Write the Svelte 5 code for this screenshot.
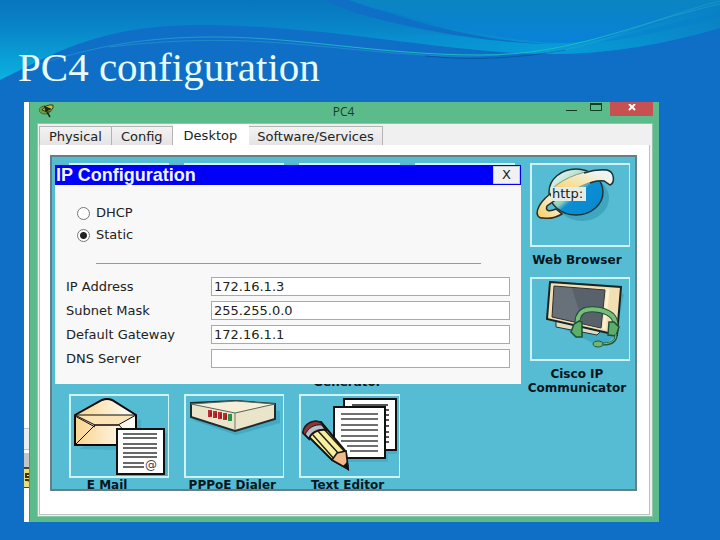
<script>
  const tabs = ['Physical', 'Config', 'Desktop', 'Software/Services'];
  let activeTab = $state('Desktop');
  let mode = $state('static');
  let fields = $state([
    { id: 'ip', label: 'IP Address', value: '172.16.1.3' },
    { id: 'mask', label: 'Subnet Mask', value: '255.255.0.0' },
    { id: 'gateway', label: 'Default Gateway', value: '172.16.1.1', active: true },
    { id: 'dns', label: 'DNS Server', value: '' }
  ]);
  const apps = [
    {}, {}, {}, {},
    { lines: ['Web Browser'], icon: 'web', roomy: true },
    {}, {},
    { lines: ['Traffic', 'Generator'] },
    {},
    { lines: ['Cisco IP', 'Communicator'], icon: 'phone', roomy: true },
    { lines: ['E Mail'], icon: 'mail' },
    { lines: ['PPPoE Dialer'], icon: 'modem' },
    { lines: ['Text Editor'], icon: 'editor' }
  ];
</script>

<main class="slide">
  <svg class="waves" viewBox="0 0 720 100" preserveAspectRatio="none" aria-hidden="true">
    <defs>
      <linearGradient id="left" x1="0" y1="0" x2="0" y2="80" gradientUnits="userSpaceOnUse">
        <stop offset="0" stop-color="#0876c0" />
        <stop offset="0.35" stop-color="#0885c8" />
        <stop offset="1" stop-color="#0bb2e0" />
      </linearGradient>
      <linearGradient id="mid" x1="0" y1="0" x2="0" y2="45" gradientUnits="userSpaceOnUse">
        <stop offset="0" stop-color="#0b84c2" />
        <stop offset="1" stop-color="#0882da" />
      </linearGradient>
      <linearGradient id="right" x1="330" y1="0" x2="720" y2="0" gradientUnits="userSpaceOnUse">
        <stop offset="0" stop-color="#0883cc" />
        <stop offset="0.55" stop-color="#069edb" />
        <stop offset="1" stop-color="#0b83c4" />
      </linearGradient>
      <linearGradient id="glow" x1="40" y1="0" x2="720" y2="0" gradientUnits="userSpaceOnUse">
        <stop offset="0" stop-color="#22a8d8" stop-opacity="0.4" />
        <stop offset="0.25" stop-color="#2299d0" />
        <stop offset="0.5" stop-color="#1cbcc8" />
        <stop offset="0.8" stop-color="#18bcc0" />
        <stop offset="1" stop-color="#1294c8" />
      </linearGradient>
    </defs>
    <path d="M0 0H720V28C665 44 610 54 550 54C450 54 330 25 200 25C100 25 55 53 0 80Z" fill="url(#left)" />
    <path d="M330 0H720V28C665 44 610 54 550 54C505 54 450 45 400 37C430 30 500 42 560 44Z" fill="url(#right)" opacity="0.7" />
    <path d="M328 0L350 0C410 18 490 41 560 43C610 43 665 20 720 3V0H350Z" fill="url(#mid)" />
    <path d="M326 0H348C405 19 470 40 550 44C480 43 400 26 360 14Q340 8 326 0Z" fill="#0f6fc6" />
    <path d="M600 42C645 29 680 22 720 12V17C675 29 640 37 600 42Z" fill="#077fce" opacity="0.45" />
    <path d="M40 64C110 41 165 37 215 37C300 37 380 55 480 55C575 55 630 24 720 4" fill="none" stroke="url(#glow)" />
    <path d="M110 47C215 34 285 43 360 50S460 57 500 55" fill="none" stroke="#2a93ce" opacity="0.7" />
    <path d="M425 56C475 61 520 58 565 50" fill="none" stroke="#0751a0" opacity="0.8" />
    <path d="M545 53C605 45 655 17 720 1" fill="none" stroke="#26a6c8" opacity="0.5" />
  </svg>

  <h1>PC4 configuration</h1>

  <section class="capture">
    <div class="backdrop" aria-hidden="true">
      <span class="pale"></span>
      <span class="grey"></span>
      <span class="yellow">
        <svg width="5" height="18" viewBox="0 0 5 18"><path d="M5 5H2V8H5M1 11H4L5 12" fill="none" stroke="#3c3410" stroke-width="2" /></svg>
      </span>
    </div>
    <div class="window">
      <header class="titlebar">
        <svg class="logo" width="16" height="14" viewBox="0 0 16 14" aria-hidden="true">
          <ellipse cx="6" cy="6" rx="6" ry="4" fill="#6b9c3e" stroke="#3d6a45" />
          <path d="M3 6Q7 0 14 1Q15 6 9 8Z" fill="#d7b63c" stroke="#2a3b20" />
          <path d="M6 3L11 5L7 7ZM8 8L11 13" fill="#142c18" stroke="#142c18" stroke-width="1.5" />
        </svg>
        <span class="caption">PC4</span>
        <button class="sys" aria-label="Minimize"><svg width="12" height="10" viewBox="0 0 12 10"><path d="M0 8.5H11" stroke="#123c26" /></svg></button>
        <button class="sys" aria-label="Maximize"><svg width="12" height="10" viewBox="0 0 12 10"><path d="M.5 2H11.500V8.500H.5Z" fill="none" stroke="#123c26" /><path d="M0 2H12" stroke="#123c26" stroke-width="2" /></svg></button>
        <button class="close" aria-label="Close window"><svg width="8" height="7" viewBox="0 0 8 7"><path d="M1 0L7 6M7 0L1 6" stroke="#fff" stroke-width="2" /></svg></button>
      </header>

      <div class="client">
        <nav class="tabs">
          {#each tabs as tab}
            <button class="tab" class:active={tab === activeTab} onclick={() => (activeTab = tab)}>{tab}</button>
          {/each}
        </nav>
        <div class="page">
          <div class="desktop">
            {#each apps as app}
              <div class="app" class:roomy={app.roomy}>
                <div class="tile">
                  {#if app.icon === 'web'}
                    <svg width="96" height="80" viewBox="0 0 96 80" aria-hidden="true">
                      <defs>
                        <linearGradient id="globe" x1="0" y1="0" x2="1" y2="1">
                          <stop offset="0" stop-color="#fff" /><stop offset="0.48" stop-color="#8fd0b8" />
                          <stop offset="0.56" stop-color="#0a8fd4" /><stop offset="1" stop-color="#0a86cc" />
                        </linearGradient>
                        <linearGradient id="ring" x1="0" y1="1" x2="1" y2="0">
                          <stop offset="0" stop-color="#f8cc5c" /><stop offset="0.5" stop-color="#f5e6b0" /><stop offset="0.8" stop-color="#eef4f2" />
                        </linearGradient>
                      </defs>
                      <ellipse cx="50" cy="33" rx="27" ry="23" fill="#2d94ae" opacity="0.55" />
                      <ellipse cx="44" cy="27" rx="27" ry="23" fill="url(#globe)" stroke="#203236" stroke-width="1.5" />
                      <path d="M18 29C4 40 1 53 11 53C17 54 25 52 30 49L24 44C17 47 13 46 15 41L22 36Z" fill="url(#ring)" stroke="#302c20" stroke-width="1.5" />
                      <path d="M20 24C32 12 55 4 75 5C83 7 83 18 78 20L72 16C60 15 50 20 32 30Z" fill="url(#ring)" stroke="#8f9880" />
                      <path d="M52 8Q64 4 75 5C83 7 83 18 78 20L72 16Q66 15 58 18" fill="none" stroke="#203236" stroke-width="1.5" />
                      <rect x="19" y="22" width="35" height="14" fill="#e3ece7" />
                      <text x="20" y="33" font-size="13" fill="#182428">http:</text>
                    </svg>
                  {:else if app.icon === 'phone'}
                    <svg width="96" height="80" viewBox="0 0 96 80" aria-hidden="true">
                      <path d="M22 45L73 50L84 13L92 15L84 56L70 68L48 58Z" fill="#2d94ae" opacity="0.45" />
                      <path d="M24 42V48L65 56L69 52V47Z" fill="#dcdcc4" stroke="#26322e" />
                      <path d="M18 3L89 8L85 56L15 40Z" fill="#f2dfb4" stroke="#192422" stroke-width="2" />
                      <path d="M22 7L73 11L69 49L20 38Z" fill="#68717a" stroke="#292f34" />
                      <path d="M40 9L73 11L69 49L51 45Z" fill="#4c545e" opacity="0.55" />
                      <path d="M76 10L72 50" stroke="#fff3cf" stroke-width="3" />
                      <path d="M46 49C43 30 55 29 68 31C81 34 86 41 82 51" fill="none" stroke="#1c5038" stroke-width="6" />
                      <path d="M46 49C43 30 55 29 68 31C81 34 86 41 82 51" fill="none" stroke="#77bd78" stroke-width="4" />
                      <path d="M47 42L50 43V58L44 58L39 53L42 45ZM77 43H82L87 48L84 57L76 56Z" fill="#5dae68" stroke="#1c5038" stroke-width="1.5" />
                      <path d="M84 55Q85 66 69 65" fill="none" stroke="#23583b" stroke-width="3" />
                      <path d="M84 55Q85 65 69 65" fill="none" stroke="#77bd78" />
                      <ellipse cx="66" cy="65" rx="5" ry="3" fill="#72b671" stroke="#23583b" />
                    </svg>
                  {:else if app.icon === 'mail'}
                    <svg width="96" height="80" viewBox="0 0 96 80" aria-hidden="true">
                      <defs><linearGradient id="paper"><stop offset="0" stop-color="#fad48d" /><stop offset="1" stop-color="#fff" /></linearGradient></defs>
                      <path d="M8 53L45 54V37H97V83H48L70 46V23Z" fill="#2d94ae" opacity="0.35" />
                      <path d="M4 19L31 4Q36 2 41 4L65 19V49H4Z" fill="url(#paper)" stroke="#080808" stroke-width="2" />
                      <path d="M4 19H65L47 29H24Z" fill="#fbe3b5" stroke="#0b0b0b" />
                      <path d="M4 49L24 29H48L65 48M4 20L24 31" fill="none" stroke="#0b0b0b" />
                      <rect x="46" y="33" width="47" height="45" fill="#fff" stroke="#111" stroke-width="2" />
                      <path d="M52 38H86M52 42H86M52 48H86M52 52H86M52 57H86M52 61H86M52 67H73M52 71H73" stroke="#686868" stroke-width="2" />
                      <text x="74" y="73" font-size="12" fill="#444">@</text>
                    </svg>
                  {:else if app.icon === 'modem'}
                    <svg width="96" height="80" viewBox="0 0 96 80" aria-hidden="true">
                      <path d="M6 24L50 39L94 27V15L75 11Z" fill="#2d94ae" opacity="0.45" />
                      <path d="M5 7L50 5L89 8V23L49 35L5 21Z" fill="#e9e4ca" stroke="#202b2c" stroke-width="2" />
                      <path d="M5 8L49 17L89 8L50 5Z" fill="#f5efd8" stroke="#56625e" />
                      <path d="M49 17V34" stroke="#707970" />
                      <path d="M24 14V21M29 15V22M34 16V23M39 17V24" stroke="#c02b32" stroke-width="4" />
                      <path d="M44 18V25" stroke="#269346" stroke-width="4" />
                      <path d="M25 16V20M30 17V21M35 18V22M40 19V23" stroke="#681d20" />
                    </svg>
                  {:else if app.icon === 'editor'}
                    <svg width="96" height="80" viewBox="0 0 96 80" aria-hidden="true">
                      <path d="M38 13H97V58H87V66H43Z" fill="#2d94ae" opacity="0.35" />
                      <rect x="43" y="3" width="52" height="51" fill="#fff" stroke="#111" stroke-width="2" />
                      <path d="M51 9H87M85 14H88M85 19H88M85 24H88M85 30H88M85 36H88M85 41H88M85 46H88" stroke="#555" stroke-width="2" />
                      <rect x="33" y="11" width="51" height="51" fill="#fff" stroke="#111" stroke-width="2" />
                      <path d="M40 18H77M40 23H77M40 29H77M40 34H77M40 40H77M40 45H77M46 50H77M49 55H77" stroke="#707070" stroke-width="2" />
                      <path d="M3 36Q8 25 20 26L45 56L47 73L31 64Z" fill="#f6eea0" stroke="#111" stroke-width="2" />
                      <path d="M12 39L34 64M17 35L39 59M21 31L44 56" stroke="#262315" stroke-width="1.5" />
                      <path d="M2 37C3 27 14 23 20 27L25 34C16 33 10 37 8 43Z" fill="#b8bdc8" stroke="#171717" stroke-width="2" />
                      <path d="M2 36C4 27 14 23 20 27L21 29C13 28 7 32 4 39Z" fill="#8d3435" stroke="#171717" />
                      <path d="M31 64L36 57L45 55L47 73Z" fill="#f4b988" stroke="#171717" stroke-width="1.500" />
                      <path d="M42 70L46 66L48 75Z" fill="#111" />
                    </svg>
                  {/if}
                </div>
                {#if app.lines}
                  <div class="name">{#each app.lines as line}<span>{line}</span>{/each}</div>
                {/if}
              </div>
            {/each}

            <form class="dialog" onsubmit={(e) => e.preventDefault()}>
              <div class="dialog-title">
                <h2>IP Configuration</h2>
                <button type="button">X</button>
              </div>
              <div class="modes">
                <label><input type="radio" name="mode" value="dhcp" bind:group={mode} />DHCP</label>
                <label><input type="radio" name="mode" value="static" bind:group={mode} />Static</label>
              </div>
              <hr />
              <div class="fields">
                {#each fields as field}
                  <label for={field.id}>{field.label}</label>
                  <input id={field.id} type="text" class:focused={field.active} bind:value={field.value} />
                {/each}
              </div>
            </form>
          </div>
        </div>
      </div>
    </div>
  </section>
</main>

<style>
  :global(body) { margin: 0; background: #0f6fc6; }
  * { box-sizing: border-box; }
  button, input { font: inherit; color: inherit; margin: 0; padding: 0; border-radius: 0; }
  .slide {
    position: relative;
    min-height: 100vh;
    padding: 44px 61px 18px 18px;
    background: #0f6fc6;
    font: 13px/16px "DejaVu Sans", Verdana, sans-serif;
    color: #222;
  }
  .waves { position: absolute; top: 0; left: 0; width: 100%; height: 100px; }
  h1 {
    position: relative;
    margin: 0;
    height: 58px;
    font: 41px/46px "Liberation Serif", "Times New Roman", serif;
    color: #e6fdfc;
  }
  .capture { position: relative; display: flex; margin-left: 6px; background: #fff; }
  .backdrop { width: 5px; flex: none; padding-top: 326px; }
  .backdrop span { display: block; }
  .pale { height: 22px; margin-bottom: 3px; background: #e9eef3; border: solid #b9c2ca; border-width: 1px 0; }
  .grey { height: 14px; background: #c3c5c7; }
  .yellow { height: 21px; background: #e8dc7c; border: solid #4d461c; border-width: 2px 0 1px; }
  .yellow svg { display: block; }
  .window { flex: 1; min-width: 0; background: #5cbb8b; border-left: 1px solid #479a71; padding: 0 6px 5px 7px; }
  .titlebar { display: flex; align-items: flex-start; height: 21px; }
  .logo { margin: 2px 0 0 2px; }
  .caption { flex: 1; padding-left: 66px; text-align: center; font: 12px/20px "Open Sans", sans-serif; color: #173b28; }
  .sys { width: 12px; height: 10px; margin-right: 12px; border: 0; background: none; }
  .sys svg, .close svg { display: block; }
  .sys:nth-of-type(2) { margin-right: 8px; }
  .close { display: flex; justify-content: center; width: 43px; height: 14px; padding-top: 2px; border: 0; background: #c75050; }
  .client { border: 1px solid #8fc5aa; background: #f0f0f0; padding: 0 2px 1px 1px; }
  .tabs { display: flex; align-items: flex-end; height: 21px; }
  .tab {
    height: 19px;
    padding: 0 9px;
    border: 1px solid #b4b4b4;
    border-bottom: 0;
    background: linear-gradient(#f3f3f3, #e4e4e4);
    line-height: 17px;
  }
  .tab + .tab { border-left: 0; }
  .tab.active { height: 21px; padding: 0 11px; background: #fff; border-color: #fff; }
  .tab:last-child { padding: 0 8px; }
  .page { background: #fff; border: solid #b8c4be; border-width: 0 1px 1px; padding: 10px 12px 23px 10px; }
  .desktop {
    position: relative;
    display: grid;
    grid-template-columns: repeat(5, minmax(0, 1fr));
    grid-template-rows: 114px 117px 95px;
    column-gap: 15px;
    padding: 6px 5px 0 17px;
    border: 2px solid #667e85;
    background: #55bcd4;
  }
  .tile { height: 84px; border: 2px solid #cdf3f2; border-right-width: 1px; overflow: hidden; }
  .tile svg { display: block; }
  .name {
    display: flex;
    flex-direction: column;
    align-items: center;
    font-weight: 700;
    font-size: 12px;
    line-height: 14px;
    color: #06161c;
    white-space: nowrap;
  }
  .roomy .name { margin: 6px 6px 0 0; }
  .app:not(.roomy) .name { margin-right: 4px; }
  .app:nth-child(11) .name { margin-right: 24px; }
  .dialog {
    position: absolute;
    top: 8px;
    left: 3px;
    right: 114px;
    height: 219px;
    background: #f8f8f8;
  }
  .dialog-title { display: flex; justify-content: space-between; height: 20px; padding: 1px; background: #0000f8; }
  h2 { margin: 0; font: 700 18px/18px "Liberation Sans", Arial, sans-serif; color: #f0f4ff; }
  .dialog-title button { width: 27px; border: 1px solid #ccc; background: #f1f1f1; line-height: 16px; }
  .modes { display: flex; flex-direction: column; gap: 6px; padding: 20px 0 0 22px; }
  .modes label { display: flex; align-items: center; gap: 6px; }
  .modes input { appearance: none; width: 13px; height: 13px; border: 1px solid #777; border-radius: 50%; background: #fff; }
  .modes input:checked { background: radial-gradient(circle, #222 0 3px, #fff 4px); }
  hr { margin: 20px 40px 0 41px; border: 0; border-top: 1px solid #999; }
  .fields { display: grid; grid-template-columns: 145px 1fr; row-gap: 5px; padding: 13px 11px 0; align-items: center; }
  .fields input { width: 100%; height: 19px; padding: 0 2px; border: 1px solid #aaa; background: #fff; outline: 0; }
  .fields input.focused { border-color: #7eb4ea; }
</style>
